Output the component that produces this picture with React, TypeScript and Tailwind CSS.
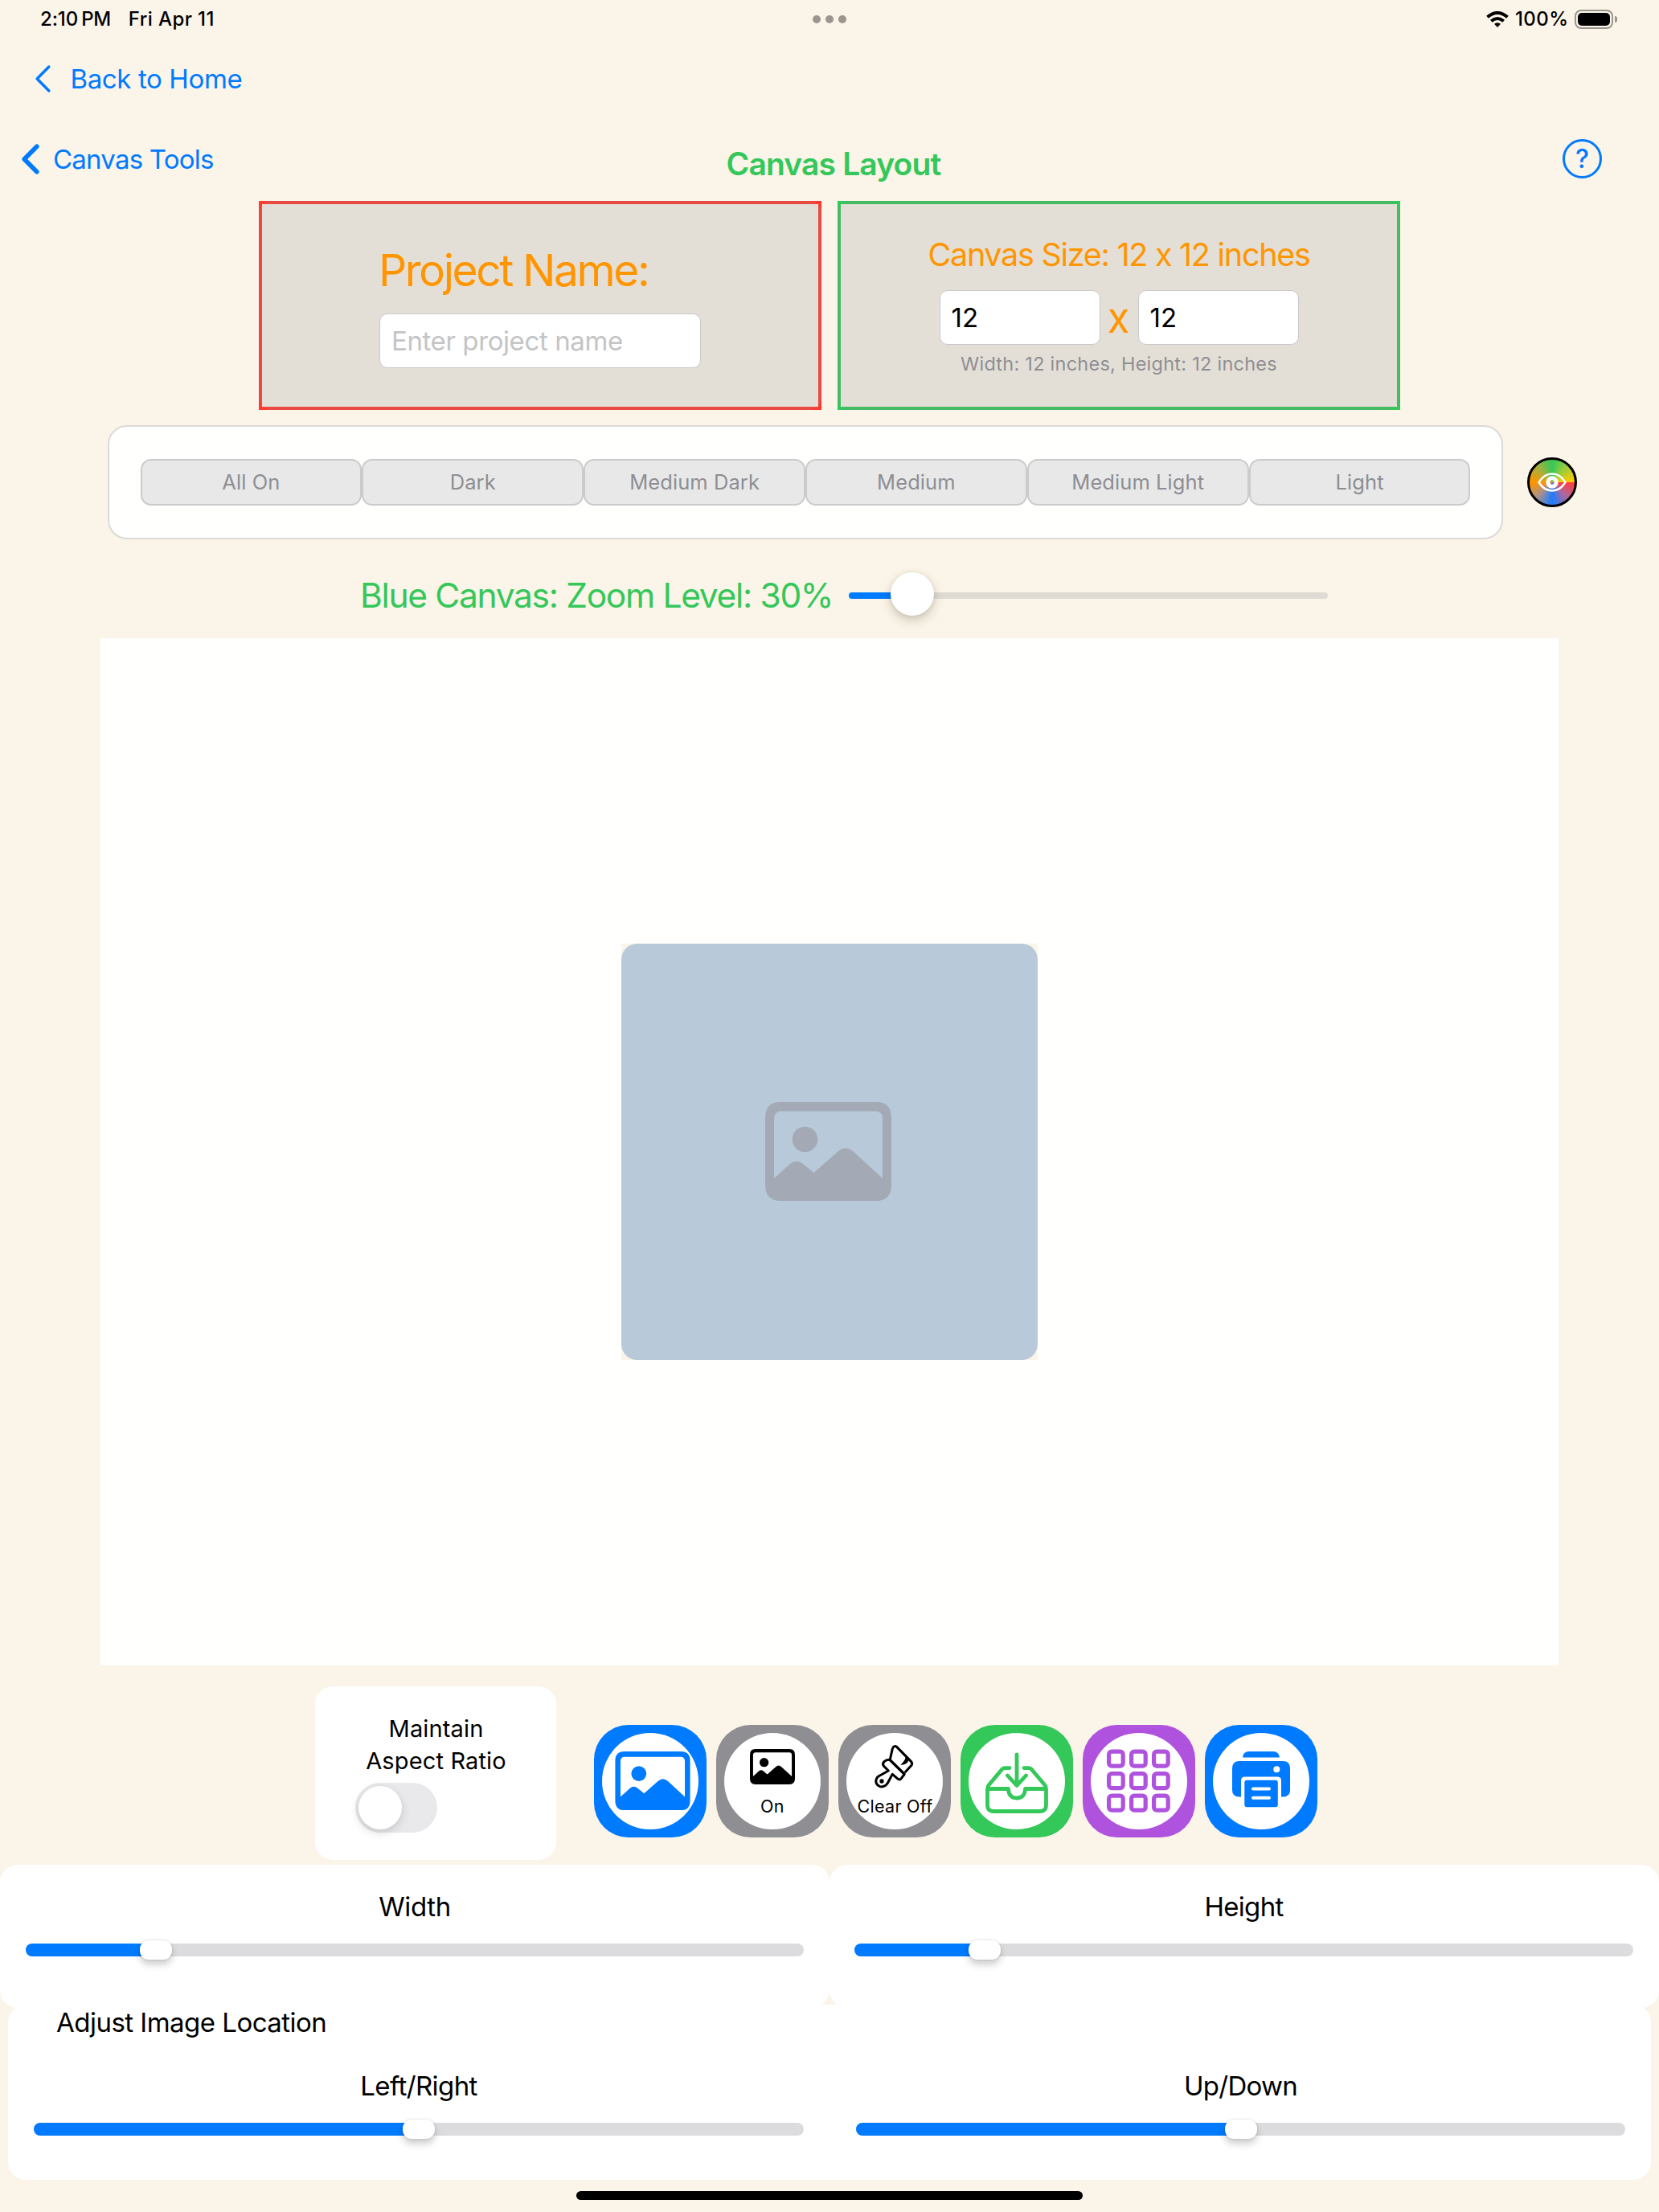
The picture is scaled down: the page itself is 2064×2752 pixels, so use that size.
import type { ReactNode } from "react";

function PhotoIcon({ className }: { className: string }) {
  return (
    <svg viewBox="0 0 157 123" className={className} fill="currentColor">
      <path
        fillRule="evenodd"
        d="M19 0H138Q157 0 157 20V103Q157 123 138 123H19Q0 123 0 103V20Q0 0 19 0ZM20 11.5Q11 11.5 11 21V95L31 77Q39 70.500 47 77L60.500 88L90 62Q100 53 110 62L146 95V21Q146 11.500 137 11.500Z"
      />
      <circle cx="49.5" cy="46.5" r="15.8" />
    </svg>
  );
}

function BrushIcon() {
  return (
    <svg viewBox="140 78 160 172" className="h-[57.3px] w-[53.3px]" fill="none" stroke="#000" strokeWidth="9" strokeLinejoin="round" strokeLinecap="round">
      <path d="M204 138L213 98Q218 84 229 91L283 146Q289 153 284 160L262 184" />
      <path d="M203 139L256 192Q258 196 253 199L246 209Q240 217 232 210L213 193L194 228Q183 243 166 239Q146 230 153 211Q157 202 166 198L198 180L181 163Q174 155 181 147Q191 138 203 139Z" />
      <path d="M203 139L258 192" />
      <path d="M270 130L262 127Q262 142 243 158Q266 158 273 143Z" fill="#000" stroke="none" />
      <circle cx="173" cy="219" r="8" fill="#000" stroke="none" />
    </svg>
  );
}

function TrayIcon() {
  return (
    <svg viewBox="0 0 78 76" className="h-[76px] w-[78px]" fill="none" stroke="#34c759" strokeWidth="4.8" strokeLinecap="round" strokeLinejoin="round">
      <path d="M39 3V41M27.500 29L39 41.500L50.500 29" />
      <path d="M30 19.600H24.500Q21.500 19.600 20 22L4 41Q2.500 43 2.500 46V66Q2.500 73.500 10 73.500H68Q75.500 73.500 75.500 66V46Q75.500 43 74 41L58 22Q56.500 19.600 53.500 19.600H48" />
      <path d="M3 45.500H28.500Q29 57 39 57Q49 57 49.500 45.500H75" />
    </svg>
  );
}

function GridIcon() {
  const steps = [0, 1, 2];
  return (
    <svg viewBox="0 0 80 80" className="h-20 w-20" fill="none" stroke="#af52de" strokeWidth="5.2">
      {steps.map((row) =>
        steps.map((col) => (
          <rect key={`${row}-${col}`} x={2.6 + col * 28} y={3.1 + row * 27.5} width="17.600" height="18" rx="3.600" />
        )),
      )}
    </svg>
  );
}

function PrinterIcon() {
  return (
    <svg viewBox="0 0 72 70" className="h-[70px] w-[72px]">
      <path d="M13 7.500Q13.500 0 21 0H51Q58 0 59 7.500Z" fill="#007aff" />
      <path d="M9 12H63Q72 12 72 21V48Q72 56.500 63 56.500H9Q0 56.500 0 48V21Q0 12 9 12Z" fill="#007aff" />
      <path d="M11 58V36Q11 31.500 16 31.500H56Q61 31.500 61 36V58Z" fill="#fff" />
      <rect x="15.300" y="35.800" width="41.500" height="33.500" rx="3" fill="#007aff" />
      <path d="M26 46.500H46M26 57.700H46" stroke="#fff" strokeWidth="4" strokeLinecap="round" />
      <circle cx="55.300" cy="22.300" r="4" fill="#fff" />
    </svg>
  );
}

function Chevron({ className, strokeWidth }: { className: string; strokeWidth: number }) {
  return (
    <svg viewBox="0 0 22 38" className={className} fill="none" stroke="#007aff" strokeWidth={strokeWidth} strokeLinecap="round" strokeLinejoin="round">
      <path d="M18.800 3.200L3.200 19L18.800 34.800" />
    </svg>
  );
}

function StatusBar() {
  return (
    <header className="grid h-12 grid-cols-3 items-center text-[24px] font-medium leading-6 text-black">
      <div className="flex items-center pl-[50px] tracking-[0.400px]">
        <span className="tracking-[-0.1px]">2:10</span>
        <span className="ml-[4px] tracking-[-0.3px]">PM</span>
        <span className="ml-[22px]">Fri Apr 11</span>
      </div>
      <div className="flex items-center justify-center gap-1.5">
        <span className="size-[10px] rounded-full bg-[#9a958e]" />
        <span className="size-[10px] rounded-full bg-[#9a958e]" />
        <span className="size-[10px] rounded-full bg-[#9a958e]" />
      </div>
      <div className="flex items-center justify-end pr-[52px]">
        <svg viewBox="0 0 28 20" className="h-5 w-7" fill="none" stroke="#000" strokeWidth="4">
          <path d="M1.500 7.200Q14 -3.200 26.500 7.200" />
          <path d="M6.300 12.200Q14 5.800 21.700 12.200" />
          <path d="M14 20L10 15.800Q14 12.600 18 15.800Z" fill="#000" stroke="none" />
        </svg>
        <span className="ml-[8px] w-[65px] whitespace-nowrap tracking-[0.4px]">100%</span>
        <span className="ml-[9px] flex h-6 w-12 rounded-[8px] border-2 border-[#9a968e] p-[2px]">
          <span className="flex-1 rounded-[5px] bg-black" />
        </span>
        <span className="ml-[2px] h-2 w-[3px] rounded-r-full bg-[#9a968e]" />
      </div>
    </header>
  );
}

function BorderedBox({ className, children }: { className: string; children: ReactNode }) {
  return (
    <section className={`relative h-[260px] w-[700px] border-4 ${className}`}>
      <div className="absolute -inset-1 rounded-[16px] bg-[#8e8e93]/20" />
      <div className="relative">{children}</div>
    </section>
  );
}

const inputClass =
  "block h-[68px] rounded-[10px] border border-[#c9c9cb] bg-white px-[14px] text-[33px] text-black outline-none placeholder:text-[#c4c4c6]";

function ProjectBox() {
  return (
    <BorderedBox className="border-[#ff3b30]">
      <div className="mx-auto flex w-[400px] flex-col pt-[52px]">
        <label className="-ml-px h-[60px] whitespace-nowrap text-[55px] leading-[60px] tracking-[-2.400px] text-[#ff9500]">Project Name:</label>
        <input className={`${inputClass} mt-6 w-[400px] tracking-[-0.400px]`} placeholder="Enter project name" />
      </div>
    </BorderedBox>
  );
}

function SizeBox() {
  return (
    <BorderedBox className="border-[#34c759]">
      <div className="flex flex-col items-center pt-[43px]">
        <h2 className="whitespace-nowrap text-[39.500px] leading-10 tracking-[-1.270px] text-[#ff9500]">Canvas Size: 12 x 12 inches</h2>
        <div className="mt-6 flex items-center">
          <input className={`${inputClass} w-[200px]`} defaultValue="12" />
          <span className="flex w-[47px] justify-center text-[53px] leading-10 text-[#ff9500]">
            <span className="-ml-px scale-x-95">x</span>
          </span>
          <input className={`${inputClass} w-[200px]`} defaultValue="12" />
        </div>
        <p className="mt-[11px] whitespace-nowrap text-[23.500px] leading-[26px] tracking-[0.250px] text-[#8e8e93]">Width: 12 inches, Height: 12 inches</p>
      </div>
    </BorderedBox>
  );
}

const shades = ["All On", "Dark", "Medium Dark", "Medium", "Medium Light", "Light"];

function ShadeFilter() {
  return (
    <div className="mt-[19px] flex items-center pl-[134px]">
      <div className="flex h-[142px] w-[1736px] items-center rounded-[24px] border-2 border-[#dcdad8] bg-[#fffffe] px-[38.500px]">
        {shades.map((label) => (
          <button key={label} className="h-[58px] flex-1 rounded-[13px] border-2 border-[#cbcbcd] bg-[#e8e8e8] text-[25.500px] tracking-[0.080px] text-[#8e8e93]">
            {label}
          </button>
        ))}
      </div>
      <button className="ml-[30px] flex size-[62px] items-center justify-center rounded-full border-[3px] border-black bg-[conic-gradient(from_90deg,#ff3b40,#b0689c_12.5%,#1a7cff_25%,#a8918c_37.5%,#ff9500_50%,#a8b03c_62.5%,#34c759_75%,#a0cc38_87.5%,#ffcc00)] bg-origin-border">
        <svg viewBox="0 0 36 24" className="h-6 w-9 shrink-0" fill="none" stroke="#fff">
          <path d="M1.500 12Q8 1.500 18 1.500T34.500 12Q28 22.500 18 22.500T1.500 12Z" strokeWidth="2.400" strokeLinejoin="round" />
          <circle cx="18" cy="12" r="5.200" strokeWidth="5" />
        </svg>
      </button>
    </div>
  );
}

function ZoomRow() {
  return (
    <div className="flex h-[123px] items-center pb-1 pl-[448px] pt-5">
      <span className="w-[608px] whitespace-nowrap text-[42.500px] leading-[48px] tracking-[-1.330px] text-[#34c759]">Blue Canvas: Zoom Level: 30%</span>
      <div className="relative h-2 w-[596px] rounded-full bg-[#dfdad4]">
        <div className="h-2 w-[80px] rounded-full bg-[#007aff]" />
        <div className="absolute -top-[25px] left-[52px] size-[54px] rounded-full bg-white shadow-[0_6px_14px_rgba(60,60,30,0.22),0_1px_6px_rgba(60,60,30,0.1)]" />
      </div>
    </div>
  );
}

function ToolButton({ className, children }: { className: string; children: ReactNode }) {
  return (
    <button className={`flex size-[140px] items-center justify-center rounded-[43px] ${className}`}>
      <span className="flex size-[120px] flex-col items-center rounded-full bg-white">{children}</span>
    </button>
  );
}

function ToolRow() {
  return (
    <div className="flex h-[248px] pl-[392px]">
      <div className="mt-[26px] h-[216px] w-[300px] rounded-[22px] bg-white">
        <p className="pl-px pt-[33px] text-center text-[29px] leading-10 tracking-[0.150px] text-black">
          Maintain
          <br />
          Aspect Ratio
        </p>
        <div className="ml-[50px] mt-[7px] flex h-[62px] w-[102px] items-center rounded-full bg-[#e9e9eb] px-1">
          <span className="size-[54px] rounded-full bg-white shadow-[0_4px_12px_rgba(0,0,0,0.15)]" />
        </div>
      </div>
      <div className="ml-[47px] mt-[74px] flex gap-3">
        <ToolButton className="bg-[#007aff]">
          <PhotoIcon className="ml-[6px] mt-[23px] h-[73px] w-[94px] text-[#007aff]" />
        </ToolButton>
        <ToolButton className="bg-[#8e8e93]">
          <span className="flex h-[84px] items-center">
            <PhotoIcon className="h-11 w-14 text-black" />
          </span>
          <span className="text-[21.500px] leading-[14px] tracking-[0.500px] text-black">On</span>
        </ToolButton>
        <ToolButton className="bg-[#8e8e93]">
          <span className="flex h-[84px] items-center">
            <BrushIcon />
          </span>
          <span className="ml-px whitespace-nowrap text-[21.500px] leading-[14px] tracking-[0.300px] text-black">Clear Off</span>
        </ToolButton>
        <ToolButton className="bg-[#34c759]">
          <span className="mt-[24px]">
            <TrayIcon />
          </span>
        </ToolButton>
        <ToolButton className="bg-[#af52de]">
          <span className="-ml-px mt-5">
            <GridIcon />
          </span>
        </ToolButton>
        <ToolButton className="bg-[#007aff]">
          <span className="mt-[22.500px]">
            <PrinterIcon />
          </span>
        </ToolButton>
      </div>
    </div>
  );
}

function LabeledSlider({ label, fill, tracking }: { label: string; fill: string; tracking: string }) {
  return (
    <div className="flex flex-col items-center">
      <span className={`h-11 text-[33px] leading-[44px] text-black ${tracking}`}>{label}</span>
      <div className="mt-6 flex h-4 w-full items-center rounded-full bg-[#dcdcde]">
        <div className={`h-4 shrink-0 rounded-l-full bg-[#007aff] ${fill}`} />
        <div className="-ml-5 h-6 w-10 shrink-0 rounded-[11px] bg-white shadow-[0_6px_10px_rgba(0,0,0,0.2),0_0_3px_rgba(0,0,0,0.15)]" />
      </div>
    </div>
  );
}

export default function App() {
  return (
    <div className="flex h-[2752px] w-[2064px] flex-col overflow-hidden bg-[#fbf4e8] font-[Inter,sans-serif]">
      <StatusBar />
      <div className="flex h-[100px] items-center pl-[42.500px] text-[33px] leading-10 text-[#007aff]">
        <Chevron className="h-[36px] w-[21px]" strokeWidth={3.6} />
        <span className="ml-[24px] tracking-[-0.380px]">Back to Home</span>
      </div>
      <nav className="grid h-[102px] grid-cols-3 items-center pb-0.5">
        <div className="flex items-center pl-[27px] text-[33px] leading-10 text-[#007aff]">
          <Chevron className="h-[38px] w-[22px]" strokeWidth={5.6} />
          <span className="ml-[17px] tracking-[-0.780px]">Canvas Tools</span>
        </div>
        <h1 className="mt-3 pl-[10px] text-center text-[39px] font-semibold leading-10 tracking-[-0.860px] text-[#34c759]">Canvas Layout</h1>
        <div className="flex justify-end pr-[71px]">
          <span className="-mt-px flex size-[49px] items-center justify-center rounded-full border-[3.500px] border-[#007aff] text-[32px] font-medium leading-none text-[#007aff]">
            ?
          </span>
        </div>
      </nav>
      <div className="flex justify-center gap-5">
        <ProjectBox />
        <SizeBox />
      </div>
      <ShadeFilter />
      <ZoomRow />
      <main className="mx-[125px] flex h-[1278px] items-center justify-center bg-[#fffffd]">
        <div className="bg-[#fbf4e8]">
          <div className="flex size-[518px] items-center justify-center rounded-[20px] bg-[#b8c9d9]">
            <PhotoIcon className="mb-[2px] mr-1 h-[123px] w-[157px] text-[#a3aab6]" />
          </div>
        </div>
      </main>
      <ToolRow />
      <div className="grid h-[178px] grid-cols-2">
        <section className="rounded-[22px] bg-white px-8 pt-[30px]">
          <LabeledSlider label="Width" fill="w-[162px]" tracking="tracking-[-0.370px]" />
        </section>
        <section className="rounded-[22px] bg-white pl-[31px] pr-8 pt-[30px]">
          <LabeledSlider label="Height" fill="w-[162px]" tracking="tracking-[-0.700px]" />
        </section>
      </div>
      <section className="-mt-1 mx-[10px] h-[218px] rounded-[22px] bg-white">
        <h2 className="pl-[60px] text-[33px] leading-[44px] tracking-[-0.520px] text-black">Adjust Image Location</h2>
        <div className="mt-[35px] grid grid-cols-2">
          <div className="px-8 pb-px">
            <LabeledSlider label="Left/Right" fill="w-[479px]" tracking="tracking-[-0.580px]" />
          </div>
          <div className="pl-[33px] pr-8">
            <LabeledSlider label="Up/Down" fill="w-[479px]" tracking="tracking-[-0.710px]" />
          </div>
        </div>
      </section>
      <div className="mx-auto mt-[14px] h-[11px] w-[630px] rounded-full bg-black" />
    </div>
  );
}
